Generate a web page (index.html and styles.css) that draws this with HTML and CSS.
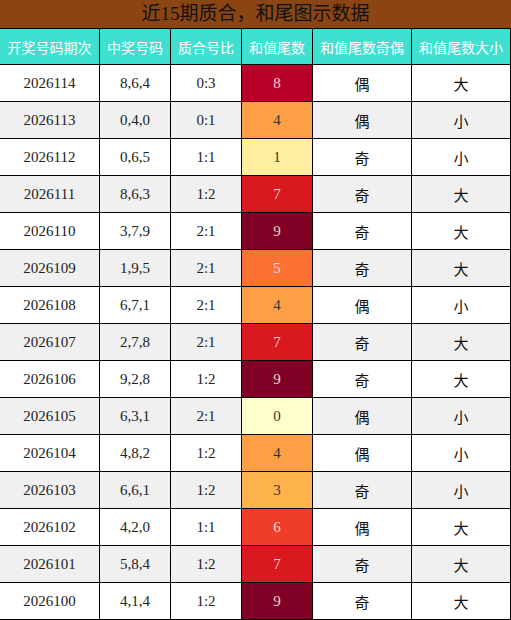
FILE: index.html
```html
<!DOCTYPE html>
<html lang="zh">
<head>
<meta charset="utf-8">
<link rel="stylesheet" href="styles.css">
</head>
<body>
<div class="board">
  <div class="title">近15期质合，和尾图示数据</div>
  <div class="grid">
    <div class="hd">开奖号码期次</div><div class="hd">中奖号码</div><div class="hd">质合号比</div><div class="hd">和值尾数</div><div class="hd">和值尾数奇偶</div><div class="hd">和值尾数大小</div>

    <div class="c">2026114</div><div class="c">8,6,4</div><div class="c">0:3</div><div class="c t t8">8</div><div class="c cj">偶</div><div class="c cj">大</div>
    <div class="c g">2026113</div><div class="c g">0,4,0</div><div class="c g">0:1</div><div class="c t t4">4</div><div class="c g cj">偶</div><div class="c g cj">小</div>
    <div class="c">2026112</div><div class="c">0,6,5</div><div class="c">1:1</div><div class="c t t1">1</div><div class="c cj">奇</div><div class="c cj">小</div>
    <div class="c g">2026111</div><div class="c g">8,6,3</div><div class="c g">1:2</div><div class="c t t7">7</div><div class="c g cj">奇</div><div class="c g cj">大</div>
    <div class="c">2026110</div><div class="c">3,7,9</div><div class="c">2:1</div><div class="c t t9">9</div><div class="c cj">奇</div><div class="c cj">大</div>
    <div class="c g">2026109</div><div class="c g">1,9,5</div><div class="c g">2:1</div><div class="c t t5">5</div><div class="c g cj">奇</div><div class="c g cj">大</div>
    <div class="c">2026108</div><div class="c">6,7,1</div><div class="c">2:1</div><div class="c t t4">4</div><div class="c cj">偶</div><div class="c cj">小</div>
    <div class="c g">2026107</div><div class="c g">2,7,8</div><div class="c g">2:1</div><div class="c t t7">7</div><div class="c g cj">奇</div><div class="c g cj">大</div>
    <div class="c">2026106</div><div class="c">9,2,8</div><div class="c">1:2</div><div class="c t t9">9</div><div class="c cj">奇</div><div class="c cj">大</div>
    <div class="c g">2026105</div><div class="c g">6,3,1</div><div class="c g">2:1</div><div class="c t t0">0</div><div class="c g cj">偶</div><div class="c g cj">小</div>
    <div class="c">2026104</div><div class="c">4,8,2</div><div class="c">1:2</div><div class="c t t4">4</div><div class="c cj">偶</div><div class="c cj">小</div>
    <div class="c g">2026103</div><div class="c g">6,6,1</div><div class="c g">1:2</div><div class="c t t3">3</div><div class="c g cj">奇</div><div class="c g cj">小</div>
    <div class="c">2026102</div><div class="c">4,2,0</div><div class="c">1:1</div><div class="c t t6">6</div><div class="c cj">偶</div><div class="c cj">大</div>
    <div class="c g">2026101</div><div class="c g">5,8,4</div><div class="c g">1:2</div><div class="c t t7">7</div><div class="c g cj">奇</div><div class="c g cj">大</div>
    <div class="c">2026100</div><div class="c">4,1,4</div><div class="c">1:2</div><div class="c t t9">9</div><div class="c cj">奇</div><div class="c cj">大</div>
  </div>
</div>
</body>
</html>
```
FILE: styles.css
```css
html, body { margin: 0; padding: 0; background: #fff; }
.board { width: 511px; font-family: "Liberation Serif", "Noto Sans CJK SC", serif; }
.title {
  height: 28px;
  border-bottom: 1px solid #000;
  background: #8b4513;
  color: #111;
  font-size: 19px;
  line-height: 28px;
  text-align: center;
  font-family: "Liberation Serif", "Noto Sans CJK SC", sans-serif;
}
.grid {
  display: grid;
  grid-template-columns: 100px 71px 71px 71px 99px 99px;
  grid-template-rows: 36px repeat(15, 37px);
}
.grid > div {
  border-right: 1px solid #000;
  border-bottom: 1px solid #000;
  display: flex;
  align-items: center;
  justify-content: center;
}
.hd {
  background: #40e0d0;
  color: #fff;
  font-family: "Noto Sans CJK SC", sans-serif;
  font-size: 14px;
}
.c { font-size: 15px; color: #222; background: #fff; }
.c.g { background: #f0f0f0; }
.cj { font-family: "Noto Sans CJK SC", sans-serif; font-size: 15px; color: #111; }
.t { font-size: 15px; }
.t0 { background: #ffffcc; color: #333; }
.t1 { background: #ffeda0; color: #333; }
.t3 { background: #feb24c; color: #333; }
.t4 { background: #fd9f44; color: #333; }
.t5 { background: #fc7233; color: #fde; }
.t6 { background: #f03d28; color: #fdd; }
.t7 { background: #d9181f; color: #fcd; }
.t8 { background: #b8002a; color: #f6d0d8; }
.t9 { background: #800026; color: #f0d0d8; }
```
